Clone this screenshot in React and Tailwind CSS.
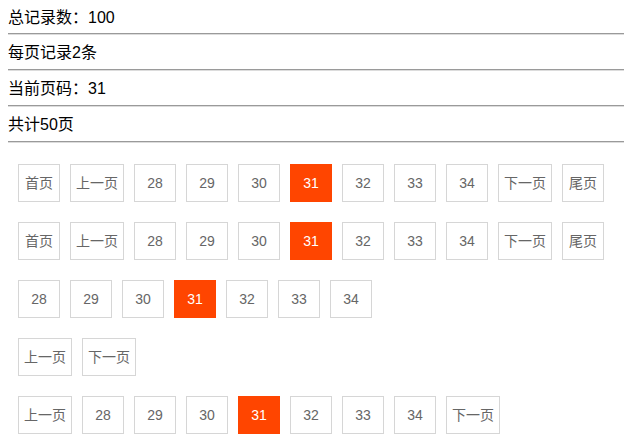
import React from 'react';

const FONT = { fontFamily: '"Liberation Sans", "Noto Sans CJK SC", sans-serif' };

const INFO = ['总记录数：100', '每页记录2条', '当前页码：31', '共计50页'];

const FULL = ['首页', '上一页', '28', '29', '30', '31', '32', '33', '34', '下一页', '尾页'];
const ROWS = [
  FULL,
  FULL,
  ['28', '29', '30', '31', '32', '33', '34'],
  ['上一页', '下一页'],
  ['上一页', '28', '29', '30', '31', '32', '33', '34', '下一页'],
];

const PageButton = ({ label }) =>
{
  const active = label === '31';
  const wide = label.length === 3;

  return (
    <span
      className={
        (wide ? 'w-[54px] ' : 'w-[42px] ') +
        (active
          ? 'bg-[#ff4500] border-[#ff4500] text-white '
          : 'bg-white border-[#d6d6d6] text-[#666] ') +
        'h-[38px] border flex items-center justify-center text-[14px] leading-none'
      }
    >
      {label}
    </span>
  );
};

const App = () =>
{
  return (
    <div className="w-[624px] h-[447px] bg-white pl-[8px] overflow-hidden" style={FONT}>

      <div className="flex flex-col">
        {INFO.map((text, i) => (
          <div key={text}>
            <div className={(i === 0 ? 'h-[33px] ' : 'h-[34px] ') + 'flex items-center text-[16px] text-black pt-[2px]'}>
              {text}
            </div>
            <div className="border-t border-t-[#9a9a9a] border-b border-b-[#dcdcdc]" />
          </div>
        ))}
      </div>

      <div className="flex flex-col gap-[20px] mt-[21px] pl-[10px]">
        {ROWS.map((row, i) => (
          <div key={i} className="flex gap-[10px]">
            {row.map((label, j) => (
              <PageButton key={j} label={label} />
            ))}
          </div>
        ))}
      </div>

    </div>
  );
};

export default App;
